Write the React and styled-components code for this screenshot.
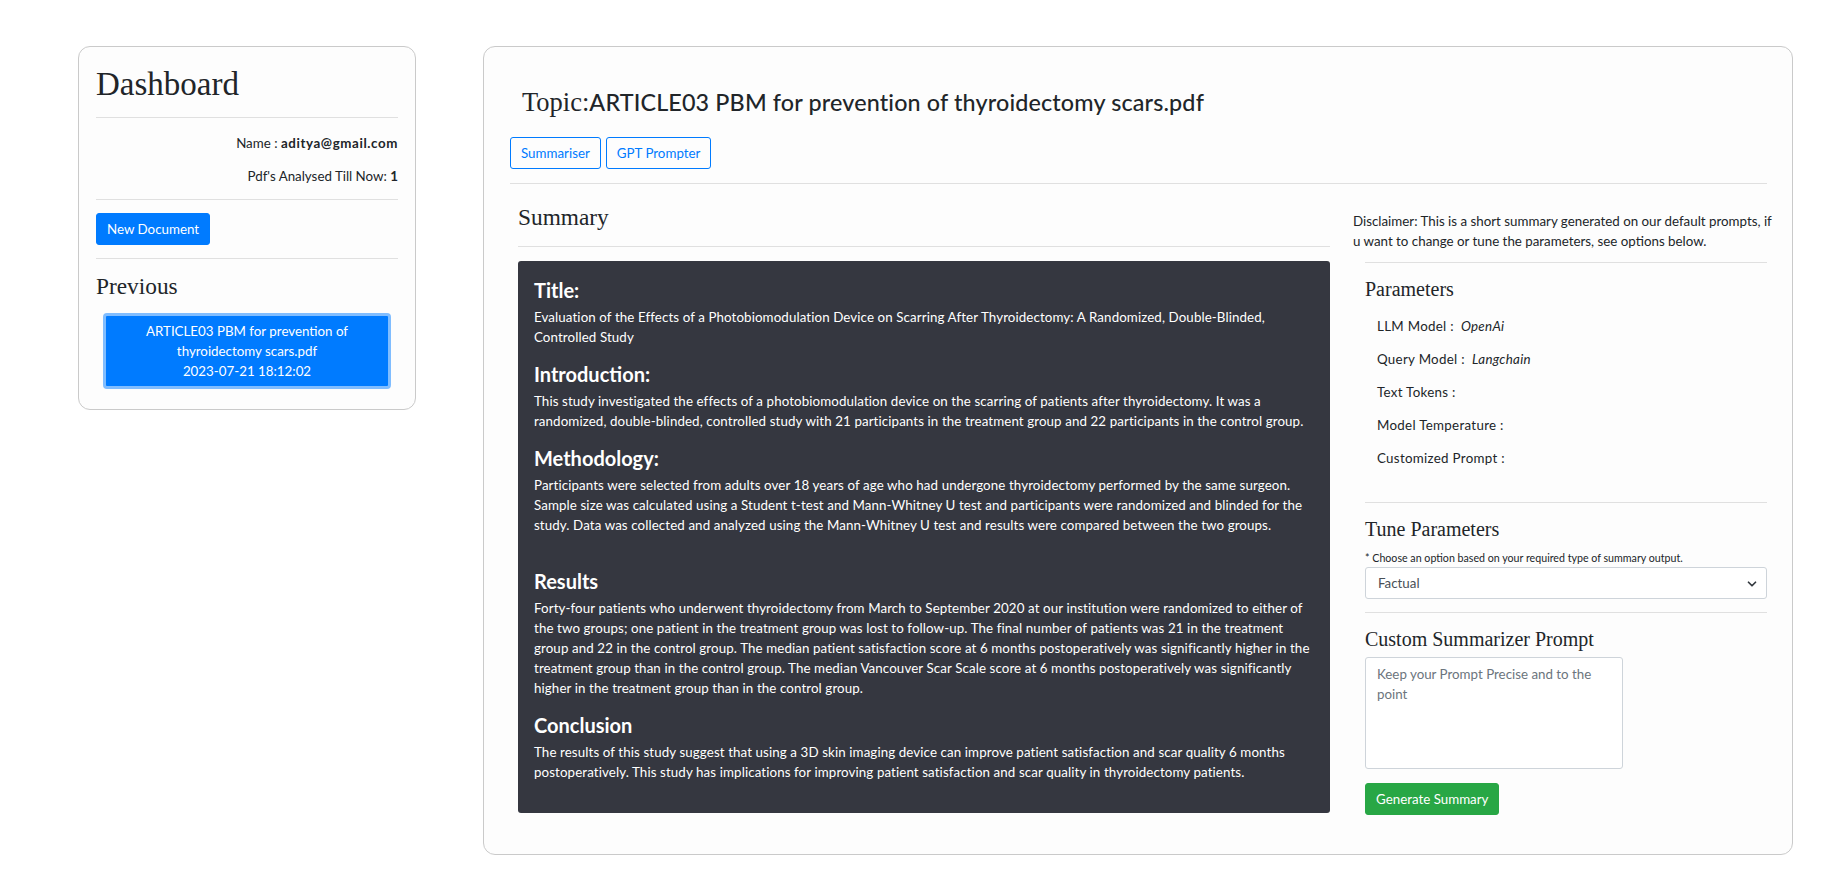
import styled, { createGlobalStyle } from "styled-components";
import { ChevronDown } from "lucide-react";

const GlobalStyle = createGlobalStyle`
  * { box-sizing: border-box; }
  body {
    margin: 0;
    background: #fff;
    color: #212529;
    font-family: Lato, "Liberation Sans", sans-serif;
    font-size: 13.33px;
    line-height: 20px;
  }
`;

const serif = `"Liberation Serif", "Times New Roman", serif`;

const Page = styled.div`
  display: flex;
  align-items: flex-start;
  gap: 67px;
  padding: 46px 0 0 78px;
`;

const Card = styled.div`
  background: #fdfdfd;
  border: 1px solid #cacaca;
  border-radius: 12px;
`;

const SideCard = styled(Card)`
  width: 338px;
  flex-shrink: 0;
  padding: 17px 17px 20px;
`;

const MainCard = styled(Card)`
  width: 1310px;
  flex-shrink: 0;
  padding: 41px 25px 39px 26px;
`;

const Rule = styled.hr`
  border: 0;
  border-top: 1px solid #e0e0e0;
  margin: ${(p) => p.$m || "13px 0"};
`;

const BigTitle = styled.h1`
  font-family: ${serif};
  font-weight: 400;
  font-size: 33px;
  line-height: 40px;
  margin: 0;
`;

const InfoLine = styled.p`
  text-align: right;
  margin: 15px 0 13px;
  & + & { margin-top: 0; }
  b {
    font-weight: 700;
    letter-spacing: ${(p) => p.$wide || "0"};
  }
`;

const Button = styled.button`
  font-family: inherit;
  font-size: 13.33px;
  line-height: 20px;
  padding: 5px 10px;
  border-radius: 3px;
  border: 1px solid ${(p) => p.$color};
  background: ${(p) => (p.$outline ? "transparent" : p.$color)};
  color: ${(p) => (p.$outline ? p.$color : "#fff")};
  cursor: pointer;
`;

const SubTitle = styled.h3`
  font-family: ${serif};
  font-weight: 400;
  font-size: 23.33px;
  line-height: 28px;
  margin: 0;
`;

const HistoryItem = styled.div`
  margin: 13px 7px 0;
  padding: 5px 10px;
  background: #007bff;
  color: #fff;
  border: 3px solid #80bdff;
  border-radius: 4px;
  text-align: center;
`;

const TopicTitle = styled.h3`
  margin: 0 0 21px 12px;
  font-size: 23.33px;
  line-height: 28px;
  font-weight: 500;
  letter-spacing: 0.15px;
  span {
    font-family: ${serif};
    font-weight: 400;
    font-size: 26.5px;
    letter-spacing: 0;
  }
`;

const Tabs = styled.div`
  display: flex;
  gap: 5px;
`;

const Body = styled.div`
  display: flex;
  align-items: flex-start;
  margin-right: -12px;
  padding-top: 6px;
`;

const SummaryCol = styled.div`
  flex: 0 0 820px;
  padding-left: 8px;
`;

const SummaryBox = styled.div`
  background: #353740;
  color: #fff;
  border-radius: 3px;
  padding: 17px 16px 31px;
`;

const Block = styled.div`
  margin-top: ${(p) => p.$gap || "15px"};
  &:first-child { margin-top: 0; }
  h4 {
    font-size: 20px;
    line-height: 24px;
    font-weight: 700;
    margin: 0 0 5px;
  }
  p {
    margin: 0;
    letter-spacing: 0.1px;
  }
`;

const SideCol = styled.div`
  flex: 0 0 426px;
  margin-left: 23px;
  padding-top: 8px;
`;

const Disclaimer = styled.p`
  margin: 0;
`;

const Panel = styled.div`
  padding: 0 12px;
`;

const PanelTitle = styled.h4`
  font-family: ${serif};
  font-weight: 400;
  font-size: 20px;
  line-height: 24px;
  margin: 0;
`;

const ParamList = styled.div`
  display: flex;
  flex-direction: column;
  gap: 13px;
  padding: 15px 12px 0;
  margin-bottom: 34px;
  letter-spacing: 0.3px;
  i { margin-left: 7px; }
`;

const Note = styled.small`
  display: block;
  font-size: 10.67px;
  line-height: 16px;
  margin: 9px 0 1px;
`;

const SelectWrap = styled.div`
  position: relative;
  svg {
    position: absolute;
    right: 8px;
    top: 10px;
    pointer-events: none;
    color: #343a40;
  }
`;

const Select = styled.select`
  appearance: none;
  width: 100%;
  height: 32px;
  padding: 0 12px;
  font-family: inherit;
  font-size: 13.33px;
  color: #495057;
  background: #fff;
  border: 1px solid #ced4da;
  border-radius: 3px;
`;

const PromptBox = styled.textarea`
  display: block;
  width: 258px;
  height: 112px;
  margin: 6px 0 14px;
  padding: 6px 11px;
  font-family: inherit;
  font-size: 13.33px;
  line-height: 20px;
  border: 1px solid #ced4da;
  border-radius: 3px;
  resize: none;
  &::placeholder { color: #6c757d; }
`;

const sections = [
  {
    title: "Title:",
    text: "Evaluation of the Effects of a Photobiomodulation Device on Scarring After Thyroidectomy: A Randomized, Double-Blinded, Controlled Study",
  },
  {
    title: "Introduction:",
    text: "This study investigated the effects of a photobiomodulation device on the scarring of patients after thyroidectomy. It was a randomized, double-blinded, controlled study with 21 participants in the treatment group and 22 participants in the control group.",
  },
  {
    title: "Methodology:",
    text: "Participants were selected from adults over 18 years of age who had undergone thyroidectomy performed by the same surgeon. Sample size was calculated using a Student t-test and Mann-Whitney U test and participants were randomized and blinded for the study. Data was collected and analyzed using the Mann-Whitney U test and results were compared between the two groups.",
  },
  {
    title: "Results",
    gap: "34px",
    text: "Forty-four patients who underwent thyroidectomy from March to September 2020 at our institution were randomized to either of the two groups; one patient in the treatment group was lost to follow-up. The final number of patients was 21 in the treatment group and 22 in the control group. The median patient satisfaction score at 6 months postoperatively was significantly higher in the treatment group than in the control group. The median Vancouver Scar Scale score at 6 months postoperatively was significantly higher in the treatment group than in the control group.",
  },
  {
    title: "Conclusion",
    text: "The results of this study suggest that using a 3D skin imaging device can improve patient satisfaction and scar quality 6 months postoperatively. This study has implications for improving patient satisfaction and scar quality in thyroidectomy patients.",
  },
];

const params = [
  ["LLM Model :", "OpenAi"],
  ["Query Model :", "Langchain"],
  ["Text Tokens :", ""],
  ["Model Temperature :", ""],
  ["Customized Prompt :", ""],
];

export default function App() {
  return (
    <>
      <GlobalStyle />
      <Page>
        <SideCard>
          <BigTitle>Dashboard</BigTitle>
          <Rule />
          <InfoLine $wide="0.6px">
            Name : <b>aditya@gmail.com</b>
          </InfoLine>
          <InfoLine>
            Pdf's Analysed Till Now: <b>1</b>
          </InfoLine>
          <Rule $m="0 0 13px" />
          <Button $color="#007bff">New Document</Button>
          <Rule />
          <SubTitle>Previous</SubTitle>
          <HistoryItem>
            ARTICLE03 PBM for prevention of thyroidectomy scars.pdf
            <br />
            2023-07-21 18:12:02
          </HistoryItem>
        </SideCard>

        <MainCard>
          <TopicTitle>
            <span>Topic:</span>ARTICLE03 PBM for prevention of thyroidectomy scars.pdf
          </TopicTitle>
          <Tabs>
            <Button $outline $color="#007bff">Summariser</Button>
            <Button $outline $color="#007bff">GPT Prompter</Button>
          </Tabs>
          <Rule $m="14px 0 13px" />
          <Body>
            <SummaryCol>
              <SubTitle>Summary</SubTitle>
              <Rule $m="15px 0 14px" />
              <SummaryBox>
                {sections.map((s) => (
                  <Block key={s.title} $gap={s.gap}>
                    <h4>{s.title}</h4>
                    <p>{s.text}</p>
                  </Block>
                ))}
              </SummaryBox>
            </SummaryCol>

            <SideCol>
              <Disclaimer>
                Disclaimer: This is a short summary generated on our default prompts, if u want to
                change or tune the parameters, see options below.
              </Disclaimer>
              <Panel>
                <Rule $m="11px 0 14px" />
                <PanelTitle>Parameters</PanelTitle>
                <ParamList>
                  {params.map(([k, v]) => (
                    <div key={k}>
                      {k}
                      {v && <i>{v}</i>}
                    </div>
                  ))}
                </ParamList>
                <Rule $m="0 0 14px" />
                <PanelTitle>Tune Parameters</PanelTitle>
                <Note>* Choose an option based on your required type of summary output.</Note>
                <SelectWrap>
                  <Select defaultValue="Factual">
                    <option>Factual</option>
                    <option>Creative</option>
                  </Select>
                  <ChevronDown size={14} strokeWidth={3} />
                </SelectWrap>
                <Rule $m="13px 0 14px" />
                <PanelTitle>Custom Summarizer Prompt</PanelTitle>
                <PromptBox placeholder="Keep your Prompt Precise and to the point" />
                <Button $color="#28a745">Generate Summary</Button>
              </Panel>
            </SideCol>
          </Body>
        </MainCard>
      </Page>
    </>
  );
}
